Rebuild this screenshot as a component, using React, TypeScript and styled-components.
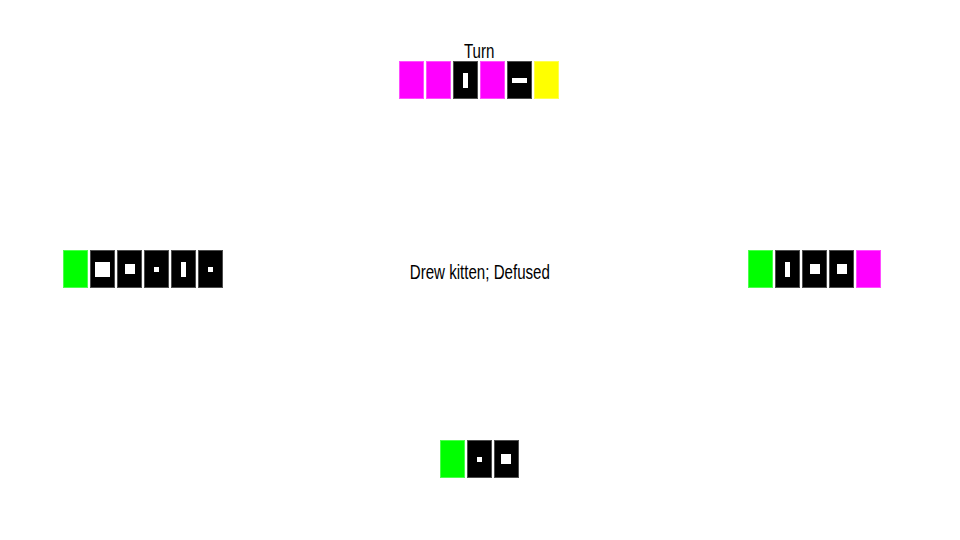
import React from "react";
import styled, { createGlobalStyle } from "styled-components";

const Global = createGlobalStyle`
  html, body { margin: 0; padding: 0; background: #fff; }
  #root { width: 960px; height: 540px; }
`;

const Page = styled.div`
  width: 960px;
  height: 540px;
  display: flex;
  flex-direction: column;
  align-items: center;
  font-family: "Liberation Sans", Arial, sans-serif;
  color: #000;
  overflow: hidden;
`;

const TopSeat = styled.div`
  margin-top: 42px;
  padding-right: 2px;
  display: flex;
  flex-direction: column;
  align-items: center;
`;

const NarrowText = styled.div<{ $lh?: number }>`
  display: inline-block;
  font-size: 20px;
  line-height: ${(p) => p.$lh ?? 19}px;
  white-space: nowrap;
  transform: scaleX(0.755);
  transform-origin: center;
`;

const MiddleRow = styled.div`
  margin-top: 149px;
  width: 100%;
  display: grid;
  grid-template-columns: 1fr auto 1fr;
  align-items: start;
`;

const SideLeft = styled.div`
  justify-self: start;
  padding-left: 62px;
`;

const SideRight = styled.div`
  justify-self: end;
  padding-right: 78px;
`;

const StatusSlot = styled.div`
  margin-top: 14px;
  display: flex;
  justify-content: center;
`;

const BottomSeat = styled.div`
  margin-top: 150px;
  padding-right: 2px;
`;

const Hand = styled.div`
  display: flex;
`;

const Card = styled.div<{ $color: string }>`
  box-sizing: border-box;
  width: 25px;
  height: 38px;
  margin: 1px;
  background: ${(p) => p.$color};
  box-shadow: inset 0 0 0 1px rgba(255, 255, 255, 0.3);
  display: flex;
  align-items: center;
  justify-content: center;
`;

const Pip = styled.div<{ $w: number; $h: number }>`
  width: ${(p) => p.$w}px;
  height: ${(p) => p.$h}px;
  background: #fff;
`;

type C = { color: string; pip?: [number, number] };

const MAG = "#ff00ff";
const YEL = "#ffff00";
const GRN = "#00ff00";
const BLK = "#000000";

const VBAR: [number, number] = [5, 15];
const HBAR: [number, number] = [15, 5];
const BIG: [number, number] = [15, 15];
const MED: [number, number] = [10, 10];
const SML: [number, number] = [5, 5];

const top: C[] = [
  { color: MAG },
  { color: MAG },
  { color: BLK, pip: VBAR },
  { color: MAG },
  { color: BLK, pip: HBAR },
  { color: YEL },
];

const left: C[] = [
  { color: GRN },
  { color: BLK, pip: BIG },
  { color: BLK, pip: MED },
  { color: BLK, pip: SML },
  { color: BLK, pip: VBAR },
  { color: BLK, pip: SML },
];

const right: C[] = [
  { color: GRN },
  { color: BLK, pip: VBAR },
  { color: BLK, pip: MED },
  { color: BLK, pip: MED },
  { color: MAG },
];

const bottom: C[] = [
  { color: GRN },
  { color: BLK, pip: SML },
  { color: BLK, pip: MED },
];

function Cards({ cards }: { cards: C[] }) {
  return (
    <Hand>
      {cards.map((c, i) => (
        <Card key={i} $color={c.color}>
          {c.pip && <Pip $w={c.pip[0]} $h={c.pip[1]} />}
        </Card>
      ))}
    </Hand>
  );
}

export default function App() {
  return (
    <>
      <Global />
      <Page>
        <TopSeat>
          <NarrowText $lh={18}>Turn</NarrowText>
          <Cards cards={top} />
        </TopSeat>
        <MiddleRow>
          <SideLeft>
            <Cards cards={left} />
          </SideLeft>
          <StatusSlot>
            <NarrowText>Drew kitten; Defused</NarrowText>
          </StatusSlot>
          <SideRight>
            <Cards cards={right} />
          </SideRight>
        </MiddleRow>
        <BottomSeat>
          <Cards cards={bottom} />
        </BottomSeat>
      </Page>
    </>
  );
}
